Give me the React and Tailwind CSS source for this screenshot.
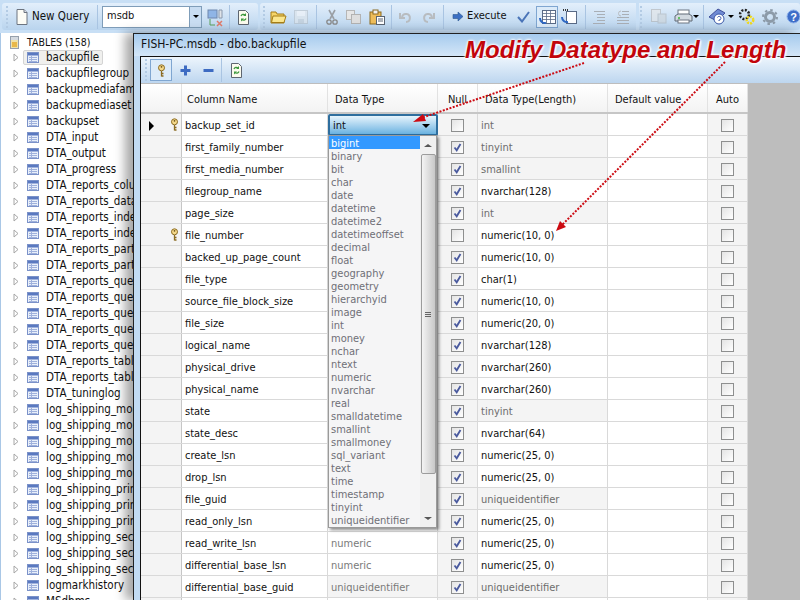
import React from "react";

const tables = [
  "backupfile","backupfilegroup","backupmediafamily","backupmediaset","backupset","DTA_input","DTA_output","DTA_progress",
  "DTA_reports_column","DTA_reports_database","DTA_reports_index","DTA_reports_index","DTA_reports_partition","DTA_reports_partition",
  "DTA_reports_query","DTA_reports_query","DTA_reports_query","DTA_reports_query","DTA_reports_query","DTA_reports_table","DTA_reports_table",
  "DTA_tuninglog","log_shipping_monitor","log_shipping_monitor","log_shipping_monitor","log_shipping_monitor","log_shipping_monitor",
  "log_shipping_primary","log_shipping_primary","log_shipping_primary","log_shipping_secondary","log_shipping_secondary","log_shipping_secondary",
  "logmarkhistory","MSdbms",
];

// name, data type (blank where the open list covers it), null, type(length), greyed, key
const rows = [
  ["backup_set_id","",false,"int",true,true],
  ["first_family_number","",true,"tinyint",true,false],
  ["first_media_number","",true,"smallint",true,false],
  ["filegroup_name","",true,"nvarchar(128)",false,false],
  ["page_size","",true,"int",true,false],
  ["file_number","",false,"numeric(10, 0)",false,true],
  ["backed_up_page_count","",true,"numeric(10, 0)",false,false],
  ["file_type","",true,"char(1)",false,false],
  ["source_file_block_size","",true,"numeric(10, 0)",false,false],
  ["file_size","",true,"numeric(20, 0)",false,false],
  ["logical_name","",true,"nvarchar(128)",false,false],
  ["physical_drive","",true,"nvarchar(260)",false,false],
  ["physical_name","",true,"nvarchar(260)",false,false],
  ["state","",true,"tinyint",true,false],
  ["state_desc","",true,"nvarchar(64)",false,false],
  ["create_lsn","",true,"numeric(25, 0)",false,false],
  ["drop_lsn","",true,"numeric(25, 0)",false,false],
  ["file_guid","",true,"uniqueidentifier",true,false],
  ["read_only_lsn","",true,"numeric(25, 0)",false,false],
  ["read_write_lsn","numeric",true,"numeric(25, 0)",false,false],
  ["differential_base_lsn","numeric",true,"numeric(25, 0)",false,false],
  ["differential_base_guid","uniqueidentifier",true,"uniqueidentifier",true,false],
  ["","",true,"",false,false],
];

const types = ["bigint","binary","bit","char","date","datetime","datetime2","datetimeoffset","decimal","float","geography","geometry","hierarchyid","image","int","money","nchar","ntext","numeric","nvarchar","real","smalldatetime","smallint","smallmoney","sql_variant","text","time","timestamp","tinyint","uniqueidentifier"];

const Ico = ({ w = 18, h = 18, children, className = "" }) => (
  <svg width={w} height={h} viewBox={`0 0 ${w} ${h}`} className={`shrink-0 ${className}`}>{children}</svg>
);

const Page = () => (
  <Ico w={12} h={18}>
    <path d="M1 1.500h7l3 3v12H1z" fill="#fdfdf6" stroke="#6c7480" />
    <path d="M8 1.500v3h3" fill="#dfe3e8" stroke="#6c7480" />
  </Ico>
);
const Refresh = () => (
  <Ico w={11} h={16}>
    <path d="M0.500 1.500h7l3 3v11h-10z" fill="#fbfbee" stroke="#5e6670" />
    <path d="M3 7a2.500 2.500 0 0 1 4-1M8 9.500a2.500 2.500 0 0 1-4 1" fill="none" stroke="#3f9a3f" strokeWidth="1.300" />
    <path d="M8 4v3H5zM3 12.500v-3h3z" fill="#3f9a3f" />
  </Ico>
);
const Key = () => (
  <Ico w={9} h={13}>
    <circle cx="4.500" cy="3.800" r="3" fill="#f5d98a" stroke="#8b6b22" />
    <path d="M4.500 7v5.500M4.500 9.500h2M4.500 12h2" stroke="#8b6b22" strokeWidth="1.300" fill="none" />
    <circle cx="4.500" cy="2.800" r="0.900" fill="#6b5217" />
  </Ico>
);
const Sep = () => <div className="w-px h-6 bg-[#a9c4e2] mx-1 shrink-0" />;
const Grip = () => (
  <div className="flex flex-col gap-[2px] w-[3px] shrink-0">
    {[0, 1, 2, 3, 4, 5].map((i) => <div key={i} className="w-[2px] h-[2px] bg-[#b3cbe4]" />)}
  </div>
);
const TableIcon = () => (
  <Ico w={12} h={11}>
    <rect x="0.500" y="0.500" width="11" height="10" fill="#e8effa" stroke="#7b92c9" />
    <rect x="1" y="1" width="10" height="2.500" fill="#5a79c0" />
    <path d="M2 5.500h8M2 7.500h8M2 9.500h8M4.500 4v6" stroke="#9fb1dc" />
  </Ico>
);
const Check = ({ on }) => (
  <div className="w-[13px] h-[13px] border border-[#8e8f8f] bg-gradient-to-br from-[#e4e4e4] to-white flex items-center justify-center">
    {on && (
      <svg width="9" height="9" viewBox="0 0 9 9">
        <path d="M1.500 4.500l2.200 2.800L7.500 1" fill="none" stroke="#4a5a9e" strokeWidth="1.800" />
      </svg>
    )}
  </div>
);

const Tree = () => (
  <div className="w-[133px] shrink-0 bg-white h-[567px] overflow-hidden pl-[9px] border-l border-[#a9c7e6]">
    <div className="h-4 flex items-center gap-[8px] pt-[3px]">
      <Ico w={9} h={13}>
        <rect x="0.500" y="0.500" width="8" height="12" fill="#f0e2a8" stroke="#96a0ac" />
        <rect x="1" y="1" width="7" height="3" fill="#d5dae0" />
        <rect x="2" y="6" width="5" height="5" fill="#e8b84a" />
      </Ico>
      <span className="text-[10.5px] text-[#111]">TABLES (158)</span>
    </div>
    {tables.map((t, i) => (
      <div key={i} className="h-4 flex items-center whitespace-nowrap">
        <svg width="7" height="9" viewBox="0 0 7 9" className="shrink-0 mr-[3px] ml-[3px]"><path d="M1 1l4 3.500L1 8z" fill="#fff" stroke="#a6a6a6" /></svg>
        <div className={`flex items-center h-[15px] pl-[3px] pr-[3px] border rounded-[2px] ${i === 0 ? "bg-[#f0f0ee] border-[#d4d4d4]" : "border-transparent"}`}>
          <TableIcon />
          <span className="text-[11.5px] text-[#111] ml-[7px] leading-[15px]">{t}</span>
        </div>
      </div>
    ))}
  </div>
);

const MainToolbar = () => (
  <div className="h-[33px] bg-[#c8dff5] flex items-center pl-[2px] relative">
    <div className="h-[27px] flex items-center bg-gradient-to-b from-[#e3effb] to-[#b9d4ee] rounded-[3px] pl-[4px] w-[256px] shrink-0">
      <Grip />
      <div className="ml-[7px] flex items-center gap-[4px] w-[77px] shrink-0">
        <Page />
        <span className="text-[11.5px] text-[#111]">New Query</span>
      </div>
      <Sep />
      <div className="w-[100px] h-[22px] bg-white border border-[#7f9db9] flex items-center pl-[4px] justify-between shrink-0">
        <span className="text-[11px] text-[#111]">msdb</span>
        <div className="w-[12px] h-full bg-[#c9ddf2] border-l border-[#7f9db9] flex items-center justify-center">
          <div className="border-x-[3px] border-x-transparent border-t-[3px] border-t-black" />
        </div>
      </div>
      <Ico w={16} h={20} className="ml-[5px] mr-[2px]">
        <rect x="1" y="3" width="9" height="8" fill="#8fb5e6" stroke="#6f87ad" />
        <path d="M12 3h3v8h-3z" fill="#dfe3e8" stroke="#8a99ad" />
        <path d="M3 12v6h5" stroke="#58a058" fill="none" />
        <path d="M10 14l5 5M15 14l-5 5" stroke="#e07b6b" strokeWidth="1.500" />
      </Ico>
      <Sep />
      <div className="ml-[4px]"><Refresh /></div>
    </div>
    <div className="h-[27px] ml-[2px] flex-1 flex items-center bg-gradient-to-b from-[#e3effb] to-[#b9d4ee] rounded-[3px] pl-[3px] overflow-hidden">
      <Grip />
      <Ico w={17} h={15} className="ml-[4px]">
        <path d="M1 3h5l1 2h7v9H1z" fill="#f5d468" stroke="#a57d17" />
        <path d="M1.500 13.500L3 7h13l-2 6.500z" fill="#fbe68d" stroke="#a57d17" />
      </Ico>
      <Ico w={15} h={15} className="ml-[7px] mr-[3px] opacity-60">
        <rect x="0.500" y="1.500" width="13" height="13" fill="#dfe5ea" stroke="#b5bec6" />
        <rect x="3" y="2" width="8" height="5" fill="#f5f6f8" />
        <rect x="4" y="10" width="6" height="4" fill="#c2cbd3" />
      </Ico>
      <Sep />
      <Ico w={12} h={16} className="ml-[5px]">
        <path d="M3 1l5 9M9 1L4 10" stroke="#9a9fa5" strokeWidth="1.600" />
        <circle cx="3" cy="13" r="2.200" fill="none" stroke="#888" strokeWidth="1.300" />
        <circle cx="9" cy="13" r="2.200" fill="none" stroke="#888" strokeWidth="1.300" />
      </Ico>
      <Ico w={15} h={14} className="ml-[8px]">
        <rect x="0.500" y="0.500" width="8" height="9" fill="#e6e6e6" stroke="#b6b6b6" />
        <rect x="5.500" y="4.500" width="9" height="9" fill="#dedede" stroke="#b2b2b2" />
      </Ico>
      <Ico w={16} h={16} className="ml-[8px] mr-[2px]">
        <rect x="1" y="3" width="11" height="12" fill="#eebd5a" stroke="#8c6a20" />
        <rect x="4" y="1" width="5" height="4" fill="#f2f2f2" stroke="#8c6a20" />
        <rect x="7.500" y="7.500" width="8" height="8" fill="#fff" stroke="#5a6472" />
        <path d="M9 10h5M9 12h5" stroke="#5a6472" />
      </Ico>
      <Sep />
      <Ico w={13} h={13} className="ml-[3px]"><path d="M3 7a4 4 0 1 1 4 5M1 3v5h5" fill="none" stroke="#b8bcc0" strokeWidth="2" /></Ico>
      <Ico w={13} h={13} className="ml-[10px] mr-[4px]"><path d="M10 7a4 4 0 1 0-4 5M12 3v5H7" fill="none" stroke="#b8bcc0" strokeWidth="2" /></Ico>
      <Sep />
      <Ico w={12} h={11} className="ml-[4px]"><path d="M1 3.500h5V1l5 4.500L6 10V7.500H1z" fill="#3b6fc4" stroke="#2e578f" strokeWidth="0.600" /></Ico>
      <span className="text-[11px] text-[#111] ml-[3px] w-[39px] shrink-0">Execute</span>
      <Ico w={13} h={12} className="ml-[11px]"><path d="M1 6l4 4.500L12 1" fill="none" stroke="#4a74b8" strokeWidth="2" /></Ico>
      <div className="ml-[6px] w-[22px] h-[22px] bg-[#dcebf9] border border-[#7fa6d1] flex items-center justify-center shrink-0">
        <Ico w={17} h={17}>
          <rect x="3.500" y="2.500" width="13" height="13" fill="#fff" stroke="#596a86" />
          <path d="M3.500 5.500h13M3.500 8.500h13M3.500 11.500h13M7.500 2.500v13M11.500 2.500v13" stroke="#596a86" strokeWidth="0.800" />
          <path d="M1 10a5 5 0 0 0 6 5" fill="none" stroke="#2e68c4" strokeWidth="2" />
        </Ico>
      </div>
      <Ico w={16} h={17} className="ml-[3px] mr-[4px]">
        <rect x="5.500" y="3.500" width="10" height="12" fill="#fff" stroke="#596a86" />
        <path d="M1 9a5 5 0 0 0 6 5" fill="none" stroke="#2e68c4" strokeWidth="2" />
        <path d="M2 2h5" stroke="#333" strokeWidth="2" strokeDasharray="1 1" />
      </Ico>
      <Sep />
      <Ico w={14} h={14} className="ml-[2px]"><path d="M2 1.500h11M5 4.500h8M5 7.500h8M5 10.500h8M1 13.500h12" stroke="#a9afb6" /></Ico>
      <Ico w={14} h={14} className="ml-[10px]"><path d="M6 1.500h7M6 4.500h7M1 7.500h12M1 10.500h12M1 13.500h12" stroke="#a9afb6" /><path d="M5 1a2 2 0 0 0 0 5" stroke="#b8bcc0" fill="none" /></Ico>
      <div className="w-[3px] h-[27px] bg-[#c8dff5] ml-[6px] shrink-0" />
      <div className="ml-[1px]"><Grip /></div>
      <Ico w={16} h={15} className="ml-[8px] opacity-60">
        <rect x="0.500" y="0.500" width="9" height="12" fill="#e6e6e6" stroke="#b2b2b2" />
        <rect x="7" y="5" width="8" height="9" fill="#cfd5d9" stroke="#aeb3b7" />
      </Ico>
      <Ico w={19} h={15} className="ml-[7px]">
        <rect x="4" y="1" width="11" height="5" fill="#fff" stroke="#6f7782" />
        <path d="M1 7l3-2h11l3 2v5H1z" fill="#d2d9e0" stroke="#606a76" />
        <rect x="4" y="11" width="11" height="3" fill="#fff" stroke="#6f7782" />
        <circle cx="5" cy="9" r="1" fill="#3dbb3d" />
      </Ico>
      <div className="border-x-[3px] border-x-transparent border-t-[3px] border-t-black" />
      <Sep />
      <Ico w={19} h={17}>
        <path d="M1 9L10 1l7 4-8 8z" fill="#6f8ad3" stroke="#3f4f99" />
        <circle cx="11" cy="11" r="5" fill="#fff" stroke="#3856a8" />
        <path d="M9.500 9.500a1.800 1.800 0 1 1 1.500 2.500v1" stroke="#3856a8" fill="none" />
      </Ico>
      <div className="ml-[1px] border-x-[3px] border-x-transparent border-t-[3px] border-t-black" />
      <Ico w={17} h={17} className="ml-[4px]">
        <circle cx="6.500" cy="6.500" r="4.500" fill="none" stroke="#222" strokeWidth="2.500" strokeDasharray="2 1.500" />
        <circle cx="12" cy="12" r="3.300" fill="none" stroke="#f1d91f" strokeWidth="2.500" strokeDasharray="2 1" />
      </Ico>
      <Ico w={16} h={16} className="ml-[7px]">
        <circle cx="8" cy="8" r="4.500" fill="none" stroke="#8c9aa8" strokeWidth="3" />
        <circle cx="8" cy="8" r="7" fill="none" stroke="#8c9aa8" strokeWidth="2" strokeDasharray="2.500 3" />
      </Ico>
      <Ico w={15} h={15} className="ml-[8px]">
        <circle cx="7.500" cy="7.500" r="6.500" fill="#3d6dc8" stroke="#8fb2ea" />
        <text x="7.500" y="11.500" fontSize="11" fontWeight="bold" textAnchor="middle" fill="#fff" fontFamily="Liberation Sans">?</text>
      </Ico>
    </div>
  </div>
);

const Header = ({ w, children, cls = "" }) => (
  <div className={`h-[28px] flex items-center pt-[4px] border-r border-[#e2e2e2] shrink-0 text-[11px] text-[#111] ${w} ${cls}`}>{children}</div>
);

const GridTable = () => (
  <div className="w-[607px] bg-white">
    <div className="flex h-[31px] border-b-2 border-[#c6c6c6] bg-gradient-to-b from-white to-[#f3f3f3] border-t border-t-[#bdbdbd]">
      <Header w="w-[41px]" />
      <Header w="w-[146px]" cls="pl-[5px] text-[11.5px]">Column Name</Header>
      <Header w="w-[110px]" cls="pl-[7px]">Data Type</Header>
      <Header w="w-[40px]" cls="justify-center">Null</Header>
      <Header w="w-[130px]" cls="pl-[7px]">Data Type(Length)</Header>
      <Header w="w-[100px]" cls="pl-[7px]">Default value</Header>
      <Header w="w-[40px]" cls="justify-center">Auto</Header>
    </div>
    {rows.map((r, i) => (
      <div key={i} className="flex h-[22px] border-b border-[#d9d9d9] text-[11px] text-[#111]">
        <div className="w-[41px] bg-[#f4f4f4] border-r border-[#c6c6c6] shrink-0 flex items-center relative pt-[2px]">
          {i === 0 && <div className="ml-[8px] border-y-[5px] border-y-transparent border-l-[5px] border-l-black" />}
          {r[5] && <div className="absolute left-[29px] top-[4px]"><Key /></div>}
        </div>
        <div className="w-[146px] shrink-0 border-r border-[#d9d9d9] pl-[3px] pt-[4px] flex items-center whitespace-nowrap">{r[0]}</div>
        <div className={`w-[110px] shrink-0 border-r border-[#d9d9d9] pl-[3px] pt-[4px] flex items-center text-[#7a7a7a] ${r[4] ? "bg-[#f4f4f4]" : ""}`}>{r[1]}</div>
        <div className="w-[40px] shrink-0 border-r border-[#d9d9d9] bg-[#f4f4f4] flex items-center justify-center pt-[2px]">{r[0] && <Check on={r[2]} />}</div>
        <div className={`w-[130px] shrink-0 border-r border-[#d9d9d9] pl-[3px] pt-[4px] flex items-center ${r[4] ? "bg-[#f4f4f4] text-[#6d6d6d]" : ""}`}>{r[3]}</div>
        <div className="w-[100px] shrink-0 border-r border-[#d9d9d9]" />
        <div className="w-[40px] shrink-0 border-r border-[#d9d9d9] bg-[#f4f4f4] flex items-center justify-center pt-[2px]">{r[0] && <Check on={false} />}</div>
      </div>
    ))}
  </div>
);

const Dropdown = () => (
  <>
    <div className="absolute left-[194px] top-[80px] w-[110px] h-[22px] rounded-[2px] border-2 border-[#2e6e9e] bg-gradient-to-b from-[#e6f4fc] to-[#69b2e0] flex items-center pl-[3px] pt-[2px] justify-between pr-[6px] text-[11px] text-[#111]">
      int
      <div className="border-x-[4px] border-x-transparent border-t-[4px] border-t-black" />
    </div>
    <div className="absolute left-[194px] top-[101px] w-[109px] h-[393px] bg-[#f5f5f6] border border-[#9a9a9a] shadow-[2px_2px_3px_rgba(0,0,0,0.45)] flex text-[11px] text-[#6f6f76]">
      <div className="flex-1">
        {types.map((t, i) => (
          <div key={t} className={`h-[13px] leading-[13px] pl-[2px] pt-[1px] whitespace-nowrap ${i === 0 ? "bg-[#3399ff] text-white" : ""}`}>{t}</div>
        ))}
      </div>
      <div className="w-[16px] shrink-0 bg-[#f0f0f0] flex flex-col items-center">
        <div className="h-[18px] flex items-center"><div className="border-x-[4px] border-x-transparent border-b-[3px] border-b-[#555]" /></div>
        <div className="w-[15px] h-[320px] border border-[#9c9c9c] rounded-[2px] bg-gradient-to-r from-[#f4f4f4] to-[#c8c8c8] flex flex-col items-center justify-center gap-[1px]">
          <div className="w-[6px] h-px bg-[#666]" /><div className="w-[6px] h-px bg-[#666]" /><div className="w-[6px] h-px bg-[#666]" />
        </div>
        <div className="flex-1" />
        <div className="h-[18px] flex items-center"><div className="border-x-[4px] border-x-transparent border-t-[3px] border-t-[#555]" /></div>
      </div>
    </div>
  </>
);

const Annot = () => (
  <>
    <svg width="800" height="600" viewBox="0 0 800 600" className="absolute left-0 top-0 pointer-events-none z-20">
      <g stroke="#cc0a12" strokeWidth="2" strokeDasharray="2 1.500" fill="none">
        <path d="M584 63L424 117" />
        <path d="M725 62L561 226" />
      </g>
      <path d="M413 122L423 114L426 121z" fill="#cc0a12" />
      <path d="M556 231L560 221L566 227z" fill="#cc0a12" />
    </svg>
    <div className="absolute left-[465px] top-[36px] z-30 whitespace-nowrap italic font-bold text-[24px] leading-[28px] text-[#c2050c] font-['Liberation_Sans',sans-serif] [text-shadow:0_0_2px_#fff,0_0_3px_#fff,0_0_3px_#fff,1px_1px_2px_#fff]">
      Modify Datatype and Length
    </div>
  </>
);

export default function App() {
  return (
    <div className="w-[800px] h-[600px] overflow-hidden relative bg-white font-['DejaVu_Sans_Condensed','DejaVu_Sans',sans-serif]">
      <MainToolbar />
      <div className="flex h-[567px]">
        <Tree />
        <div className="flex-1 relative shadow-[-8px_0_10px_rgba(0,0,0,0.35)] border-l border-t border-[#222] bg-[#c2dbf3]">
          <div className="h-[22px] flex items-center pl-[7px] pb-[2px] text-[12px] text-[#111] bg-gradient-to-b from-[#a6cbee] to-[#d4e6f7]">
            FISH-PC.msdb - dbo.backupfile
          </div>
          <div className="ml-[6px] h-full border-t border-l border-[#111] bg-[#bdbdbd]">
            <div className="h-[26px] flex items-center pl-[4px] bg-gradient-to-b from-[#edf5fc] to-[#bdd6ef]">
              <Grip />
              <div className="ml-[2px] w-[22px] h-[22px] bg-[#dcebf9] border border-[#7fa6d1] flex items-center justify-center shrink-0"><Key /></div>
              <Ico w={11} h={11} className="ml-[8px]"><path d="M5.500 0.500v10M0.500 5.500h10" stroke="#3d6bc2" strokeWidth="3" /></Ico>
              <Ico w={11} h={11} className="ml-[12px] mr-[3px]"><path d="M0.500 5.500h10" stroke="#3d6bc2" strokeWidth="3" /></Ico>
              <Sep />
              <div className="ml-[5px]"><Refresh /></div>
            </div>
            <GridTable />
            <Dropdown />
          </div>
        </div>
      </div>
      <Annot />
    </div>
  );
}
